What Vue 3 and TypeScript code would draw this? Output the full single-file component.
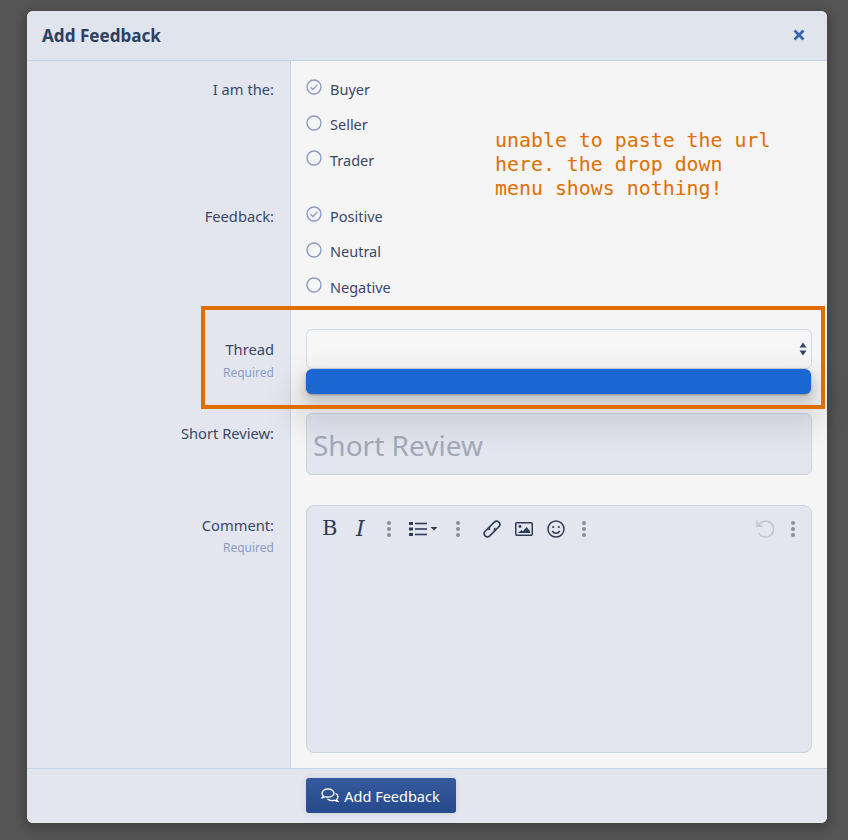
<script setup lang="ts">
const groups = [
  { label: 'I am the:', options: ['Buyer', 'Seller', 'Trader'], cls: 'row-a' },
  { label: 'Feedback:', options: ['Positive', 'Neutral', 'Negative'], cls: 'row-b' },
]
</script>

<template>
  <div class="page">
    <div class="modal">
      <header class="head">
        <h2>Add Feedback</h2>
        <svg class="close" width="12" height="12" viewBox="0 0 12 12"><path d="M1.5 1.5l9 9M10.5 1.5l-9 9" stroke="#3a62ad" stroke-width="2.8" fill="none" /></svg>
      </header>

      <div v-for="g in groups" :key="g.label" class="row" :class="g.cls">
        <div class="lab">{{ g.label }}</div>
        <div class="field">
          <div v-for="(o, i) in g.options" :key="o" class="opt">
            <svg class="radio" width="16" height="16" viewBox="0 0 16 16">
              <circle cx="8" cy="8" r="7" fill="none" stroke="#8a9bc4" stroke-width="1.4" />
              <path v-if="i === 0" d="M4.600 8.200l2.300 2.300 4.400-4.600" fill="none" stroke="#8a9bc4" stroke-width="1.3" />
            </svg>
            <span>{{ o }}</span>
          </div>
        </div>
      </div>

      <div class="row row-c">
        <div class="lab">Thread<small>Required</small></div>
        <div class="field">
          <div class="select">
            <svg width="8" height="14" viewBox="0 0 8 14"><path d="M4 0.5L7.5 5.5H.5zM4 13.5L.5 8.5h7z" fill="#34436a" /></svg>
            <div class="menu"></div>
          </div>
        </div>
      </div>

      <div class="row row-d">
        <div class="lab">Short Review:</div>
        <div class="field">
          <div class="input"><span>Short Review</span></div>
        </div>
      </div>

      <div class="row row-e">
        <div class="lab">Comment:<small>Required</small></div>
        <div class="field">
          <div class="editor">
            <div class="tools">
              <span class="b">B</span>
              <span class="i">I</span>
              <span class="dots"><i></i><i></i><i></i></span>
              <svg class="ic-list" width="30" height="16" viewBox="0 0 30 16">
                <g fill="#2f3b57"><rect x="0" y="1" width="4" height="3" /><rect x="0" y="6.5" width="4" height="3" /><rect x="0" y="12" width="4" height="3" /><rect x="6" y="1.7" width="12" height="1.6" /><rect x="6" y="7.2" width="12" height="1.6" /><rect x="6" y="12.7" width="12" height="1.6" /><path d="M21.500 6h7l-3.500 3.500z" /></g>
              </svg>
              <span class="dots d2"><i></i><i></i><i></i></span>
              <svg class="ic-link" width="18" height="18" viewBox="2 2 14 14" fill="none" stroke="#2f3b57" stroke-width="1.3">
                <g transform="rotate(-45 9 9)">
                  <path d="M9.500 6.500H4a2.500 2.500 0 0 0 0 5h4.500a2.500 2.500 0 0 0 2.400-1.800" />
                  <path d="M8.500 11.500H14a2.500 2.500 0 0 0 0-5H9.500a2.500 2.500 0 0 0-2.400 1.800" />
                </g>
              </svg>
              <svg class="ic-img" width="18" height="14" viewBox="0 0 18 14">
                <rect x=".75" y=".75" width="16.500" height="12.500" rx="1" fill="none" stroke="#2f3b57" stroke-width="1.500" />
                <circle cx="5" cy="4.500" r="1.400" fill="#2f3b57" />
                <path d="M3 11l3.500-3 1.500 1.300 3.500-4.300 3.500 4v2z" fill="#2f3b57" />
              </svg>
              <svg class="ic-smile" width="18" height="18" viewBox="0 0 18 18" fill="none" stroke="#2f3b57" stroke-width="1.500">
                <circle cx="9" cy="9" r="8" />
                <circle cx="6.200" cy="7" r="1.100" fill="#2f3b57" stroke="none" />
                <circle cx="11.800" cy="7" r="1.100" fill="#2f3b57" stroke="none" />
                <path d="M5.200 11c1 1.500 2.400 2.200 3.800 2.200s2.800-.7 3.800-2.200" />
              </svg>
              <span class="dots d3"><i></i><i></i><i></i></span>
              <span class="spacer"></span>
              <svg class="ic-undo" width="19" height="19" viewBox="0 0 19 19" fill="none" stroke="#c3c8d4" stroke-width="1.800">
                <path d="M3.500 6.500A8 8 0 1 1 4 14.500" />
                <path d="M2 1.500v5.500h5.500" />
              </svg>
              <span class="dots d4"><i></i><i></i><i></i></span>
            </div>
          </div>
        </div>
      </div>

      <footer class="foot">
        <button class="btn" type="button">
          <svg width="18" height="15" viewBox="0 0 18 15" fill="none" stroke="#fff" stroke-width="1.300">
            <path d="M7 1C3.700 1 1 2.900 1 5.200c0 1 .5 1.900 1.300 2.600-.2.900-.7 1.500-1.200 2 1.200-.1 2.200-.5 3-1.100.9.300 1.900.5 2.900.5 3.300 0 6-1.800 6-4S10.300 1 7 1z" />
            <path d="M14.500 5.500c1.500.7 2.500 1.900 2.500 3.200 0 1-.5 1.900-1.300 2.600.2.900.7 1.600 1.200 2.100-1.200-.1-2.200-.6-3-1.200-.9.300-1.800.5-2.900.5-1.900 0-3.500-.6-4.600-1.600" />
          </svg>
          Add Feedback
        </button>
      </footer>

      <p class="note">unable to paste the url<br />here. the drop down<br />menu shows nothing!</p>
      <div class="mark"></div>
    </div>
  </div>
</template>

<style>
html, body { margin: 0; background: #555; }
</style>

<style scoped>
.page {
  box-sizing: border-box;
  width: 848px;
  height: 840px;
  padding: 11px 21px 17px 27px;
  background: #555;
  font-family: "Noto Sans", "Open Sans", sans-serif;
  color: #3a4766;
  overflow: hidden;
}
.modal {
  position: relative;
  width: 800px;
  height: 812px;
  display: flex;
  flex-direction: column;
  border-radius: 6px;
  background: #f5f5f5;
  box-shadow: 0 3px 8px 4px rgba(0, 0, 0, .2);
}
.head {
  flex: none;
  height: 50px;
  display: flex;
  align-items: center;
  justify-content: space-between;
  padding: 0 22px 1px 15px;
  box-sizing: border-box;
  background: #e0e4ed;
  border-bottom: 1px solid #c6d2e7;
  border-radius: 6px 6px 0 0;
}
.head h2 {
  margin: 0;
  font-size: 17.1px;
  font-weight: 700;
  color: #2e4060;
}
.close { display: block; }
.row { display: grid; grid-template-columns: 264px 1fr; flex: none; }
.lab {
  background: #e3e6ef;
  border-right: 1px solid #c6d2e7;
  padding-right: 16px;
  text-align: right;
  font-size: 14.7px;
  line-height: 20px;
}
.lab small {
  display: block;
  margin-top: 6px;
  font-size: 12px;
  line-height: 16px;
  color: #8c9cc2;
}
.field { padding: 0 15px; }
.row-a .lab { padding-top: 18px; }
.row-a .field { padding-top: 10.25px; padding-bottom: 10.5px; }
.row-b .lab { padding-top: 17.75px; }
.row-b .field { padding-top: 10.25px; padding-bottom: 12px; }
.row-c .lab { padding-top: 22px; }
.row-c .field { padding-top: 12px; padding-bottom: 22px; }
.row-d .lab { padding-top: 32px; }
.row-d .field { padding-top: 22px; padding-bottom: 15px; }
.row-e .lab { padding-top: 25px; }
.row-e .lab small { margin-top: 5px; }
.row-e .field { padding-top: 15px; padding-bottom: 15px; }
.opt {
  height: 35.5px;
  display: flex;
  align-items: center;
  font-size: 14.5px;
}
.opt:nth-child(2) span { margin-top: -2px; }
.radio { margin-right: 8px; transform: translateY(-2px); flex: none; }
.select {
  position: relative;
  box-sizing: border-box;
  height: 40px;
  border: 1.5px solid #d3d9e6;
  border-radius: 6px;
  background: #f6f6f6;
  display: flex;
  align-items: center;
  justify-content: flex-end;
  padding-right: 4px;
}
.menu {
  position: absolute;
  left: -1px;
  right: 0;
  top: 39px;
  height: 25px;
  border-radius: 6px;
  background: #1a67d2;
  box-shadow: 0 1px 2px rgba(0, 0, 0, .3), 0 5px 8px 3px rgba(0, 0, 0, .1), 0 20px 30px 14px rgba(0, 0, 0, .1);
  z-index: 2;
}
.input {
  box-sizing: border-box;
  height: 62px;
  border: 1.5px solid #ccd3e3;
  border-radius: 6px;
  background: #e3e6ef;
  padding: 13px 6px 5px;
  font-size: 28px;
  line-height: 36px;
  color: #a3a9b8;
}
.editor {
  box-sizing: border-box;
  height: 248px;
  border: 1.5px solid #ccd3e3;
  border-radius: 8px;
  background: #e3e6ef;
}
.tools {
  display: flex;
  align-items: center;
  height: 45px;
  padding: 0 16px 0 15px;
  color: #2f3b57;
}
.b { font: 400 21px/1 "DejaVu Serif", "Liberation Serif", serif; width: 16px; }
.i { font: italic 400 22px/1 "DejaVu Serif", "Liberation Serif", serif; width: 16px; margin-left: 18px; }
.dots {
  display: flex;
  flex-direction: column;
  gap: 2px;
  margin-left: 15px;
  width: 4px;
}
.dots i { width: 4px; height: 4px; border-radius: 50%; background: #8b8f99; }
.ic-list { margin-left: 18px; }
.d2 { margin-left: 17px; }
.ic-link { margin-left: 23px; }
.ic-img { margin-left: 14px; }
.ic-smile { margin-left: 14px; }
.d3 { margin-left: 17px; }
.spacer { flex: 1; }
.ic-undo { margin-right: 2px; }
.foot {
  flex: none;
  height: 55px;
  box-sizing: border-box;
  border-top: 1px solid #c6d2e7;
  background: #e3e6ef;
  padding: 9px 0 0 279px;
  border-radius: 0 0 6px 6px;
}
.btn {
  width: 150px;
  height: 35px;
  border: 0;
  border-radius: 3px;
  background: linear-gradient(#34599f, #264a8a);
  color: #fff;
  font-family: inherit;
  font-size: 14.5px;
  display: flex;
  align-items: center;
  justify-content: center;
  gap: 5px;
  padding: 0 1px 0 0;
  box-shadow: 0 0 6px rgba(60, 80, 130, .15);
}
.note {
  position: absolute;
  left: 468px;
  top: 118px;
  margin: 0;
  font: 400 19.9px/24px "DejaVu Sans Mono", "Liberation Mono", monospace;
  color: #e06f00;
}
.mark {
  position: absolute;
  left: 174px;
  top: 295px;
  width: 624px;
  height: 103px;
  box-sizing: border-box;
  border: 4px solid #df6d00;
  pointer-events: none;
  z-index: 3;
}
</style>
